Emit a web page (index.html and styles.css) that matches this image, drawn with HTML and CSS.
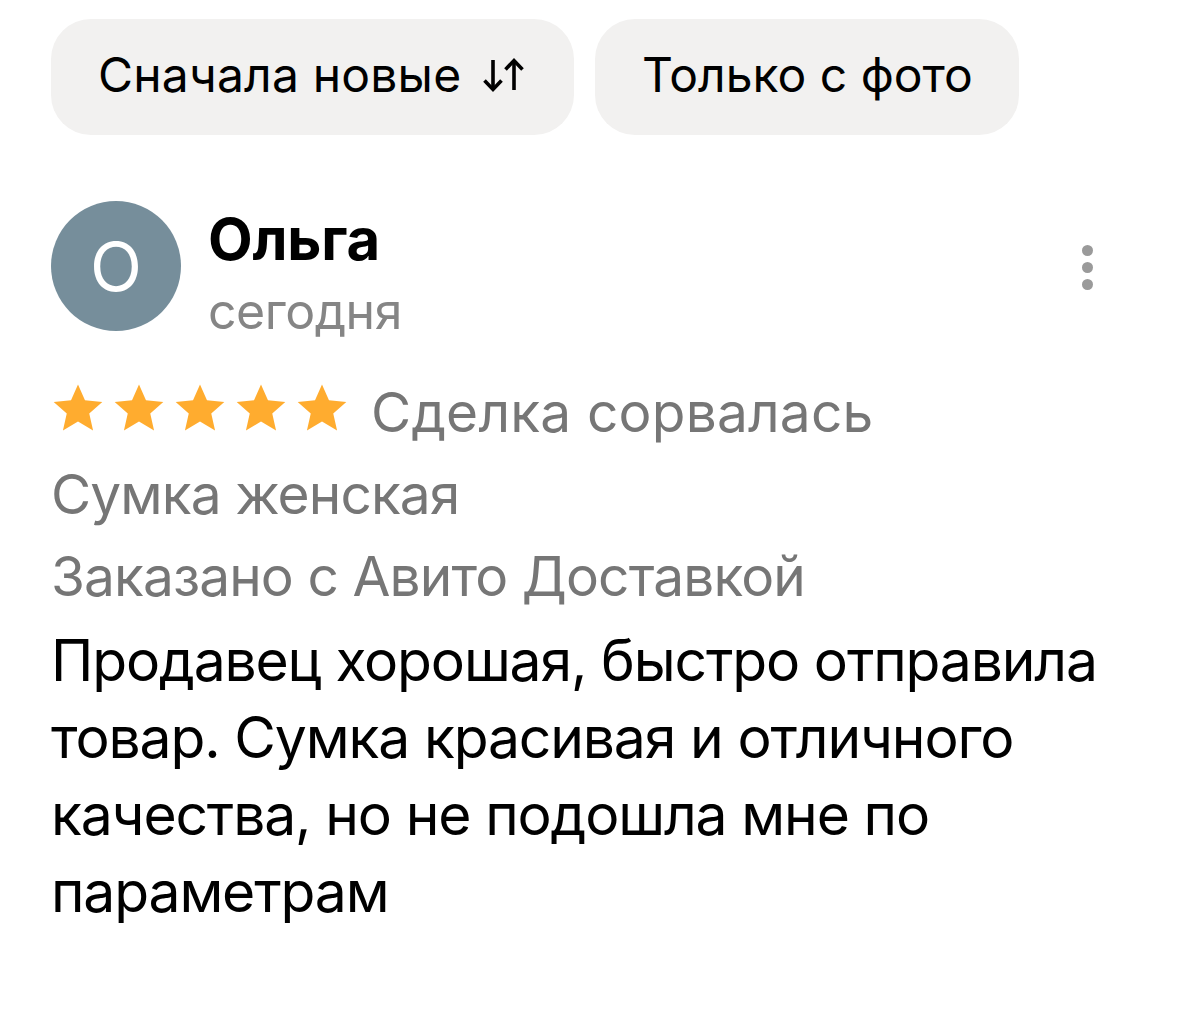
FILE: index.html
```html
<!DOCTYPE html>
<html lang="ru">
<head>
<meta charset="utf-8">
<link rel="stylesheet" href="styles.css">
</head>
<body>
<div class="page">
  <div class="filters">
    <div class="chip chip-sort">Сначала новые <span class="sort">
      <svg width="46" height="36" viewBox="0 0 46 36"><g fill="none" stroke="#000" stroke-width="3.6"><path d="M12 3v30"/><path d="M3.5 23.5L12 32.5l8.5-9"/><path d="M33 33V3"/><path d="M24.5 12.5L33 3.5l8.5 9"/></g></svg>
    </span></div>
    <div class="chip">Только с фото</div>
  </div>

  <div class="review">
    <div class="head">
      <div class="avatar">О</div>
      <div class="who">
        <div class="name">Ольга</div>
        <div class="date">сегодня</div>
      </div>
      <div class="more"><span></span><span></span><span></span></div>
    </div>
    <div class="rating">
      <div class="stars">
        <svg viewBox="0 0 24 24"><path d="M12 1.5l3.1 7.1 7.7.7-5.8 5.1 1.7 7.6L12 18l-6.7 4 1.7-7.6-5.8-5.1 7.7-.7z"/></svg>
        <svg viewBox="0 0 24 24"><path d="M12 1.5l3.1 7.1 7.7.7-5.8 5.1 1.7 7.6L12 18l-6.7 4 1.7-7.6-5.8-5.1 7.7-.7z"/></svg>
        <svg viewBox="0 0 24 24"><path d="M12 1.5l3.1 7.1 7.7.7-5.8 5.1 1.7 7.6L12 18l-6.7 4 1.7-7.6-5.8-5.1 7.7-.7z"/></svg>
        <svg viewBox="0 0 24 24"><path d="M12 1.5l3.1 7.1 7.7.7-5.8 5.1 1.7 7.6L12 18l-6.7 4 1.7-7.6-5.8-5.1 7.7-.7z"/></svg>
        <svg viewBox="0 0 24 24"><path d="M12 1.5l3.1 7.1 7.7.7-5.8 5.1 1.7 7.6L12 18l-6.7 4 1.7-7.6-5.8-5.1 7.7-.7z"/></svg>
      </div>
      <span class="status">Сделка сорвалась</span>
    </div>
    <div class="meta">Сумка женская</div>
    <div class="meta">Заказано с Авито Доставкой</div>
    <p class="text">Продавец хорошая, быстро отправила товар. Сумка красивая и отличного качества, но не подошла мне по параметрам</p>
  </div>
</div>
</body>
</html>
```

FILE: styles.css
```css
html, body {
  margin: 0;
  padding: 0;
  background: #fff;
}
body {
  font-family: Inter, "Noto Sans", sans-serif;
  color: #000;
}
.page {
  padding: 19px 51px 0 51px;
}
.filters {
  display: flex;
  gap: 21px;
}
.chip {
  height: 116px;
  box-sizing: border-box;
  padding: 0 46px 6px 47px;
  background: #f2f1f0;
  border-radius: 40px;
  display: flex;
  align-items: center;
  font-size: 48px;
  letter-spacing: 0;
  white-space: pre;
}
.chip-sort {
  padding-right: 47px;
  letter-spacing: 0.2px;
}
.sort {
  display: inline-flex;
  margin-left: 6px;
  margin-top: 2px;
}
.review {
  margin-top: 66px;
}
.head {
  display: flex;
  align-items: flex-start;
}
.avatar {
  width: 130px;
  height: 130px;
  border-radius: 50%;
  background: #768e9b;
  color: #fff;
  font-size: 68px;
  display: flex;
  align-items: center;
  justify-content: center;
  flex-shrink: 0;
}
.who {
  margin-left: 27px;
  flex: 1;
}
.name {
  font-weight: 700;
  font-size: 58px;
  letter-spacing: -0.2px;
  line-height: 60px;
  margin-top: 8px;
}
.date {
  font-size: 50px;
  color: #858585;
  line-height: 60px;
  margin-top: 12px;
  letter-spacing: -0.5px;
}
.more {
  display: flex;
  flex-direction: column;
  gap: 6px;
  margin-top: 44px;
  margin-right: 55px;
}
.more span {
  width: 11px;
  height: 11px;
  border-radius: 50%;
  background: #9a9a9a;
}
.rating {
  display: flex;
  align-items: center;
  margin-top: 30px;
  height: 82px;
}
.stars {
  display: flex;
  gap: 7px;
  margin-bottom: 8px;
}
.stars svg {
  width: 54px;
  height: 54px;
  fill: #ffac2f;
}
.status {
  margin-left: 22px;
  font-size: 55px;
  color: #767676;
  letter-spacing: 0.2px;
}
.meta {
  font-size: 55px;
  color: #767676;
  line-height: 82px;
  letter-spacing: -0.9px;
}
.text {
  margin: 5px 0 0 0;
  font-size: 57px;
  line-height: 77px;
  letter-spacing: -1.15px;
  max-width: 1080px;
}
```
